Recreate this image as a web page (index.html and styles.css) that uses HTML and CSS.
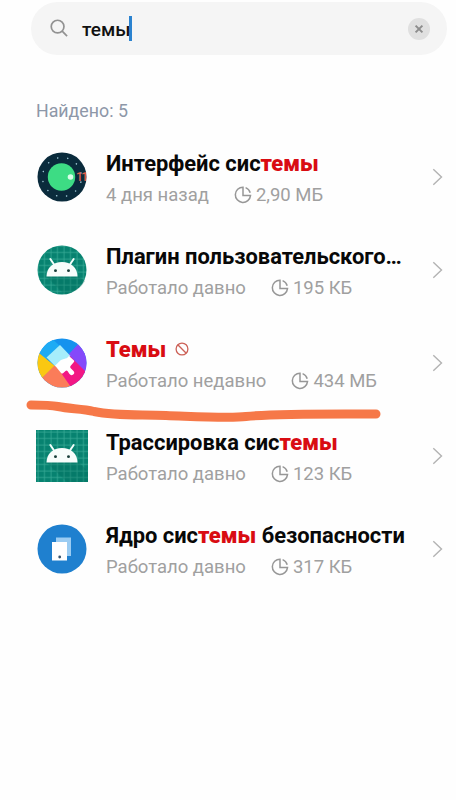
FILE: index.html
```html
<!DOCTYPE html>
<html lang="ru">
<head>
<meta charset="utf-8">
<title>Приложения</title>
<link rel="stylesheet" href="styles.css">
</head>
<body>
<svg class="defs" width="0" height="0" aria-hidden="true">
  <defs>
    <symbol id="pie" viewBox="0 0 18 18"><path d="M9 9.600V1.200A7.600 7.600 0 1 0 16.500 9.600ZM11.600 1.600A7.600 7.600 0 0 1 16.200 6.700" fill="none" stroke="currentColor" stroke-width="1.500"/></symbol>
    <symbol id="chevron" viewBox="0 0 11 18"><path d="M1.3 1.2 9.5 9 1.3 16.8" fill="none" stroke="currentColor" stroke-width="1.4"/></symbol>
    <pattern id="grid" width="6.5" height="6.5" patternUnits="userSpaceOnUse"><rect width="6.5" height="6.5" fill="#078270"/><path d="M0 3H6.5M3 0V6.5" stroke="#35a995" stroke-width=".8"/></pattern>
    <symbol id="robot" viewBox="0 0 34 21"><path d="M5 2 9 8M29 2 25 8" stroke="#f4fffc" stroke-width="2" stroke-linecap="round"/><path d="M1 20C1 11 8 5 17 5S33 11 33 20Z" fill="#f7fdfb"/><circle cx="10.3" cy="14" r="1.5" fill="#173d38"/><circle cx="23.7" cy="14" r="1.5" fill="#173d38"/></symbol>
  </defs>
</svg>
<main class="screen">
  <header class="search">
    <svg class="lens" viewBox="0 0 20 20"><circle cx="8" cy="8" r="6.7"/><path d="M12.8 12.8 18 18"/></svg>
    <span class="query">темы</span><span class="caret"></span>
    <svg class="clear" viewBox="0 0 22 22"><circle cx="11" cy="11" r="11" fill="#e0e0e0"/><path d="M7.6 7.6 14.4 14.4M14.4 7.6 7.6 14.4" stroke="#8d8d8d" stroke-width="2"/></svg>
  </header>
  <p class="found">Найдено: 5</p>
  <ul class="apps">
    <li class="app">
      <svg class="icon" viewBox="0 0 54 54"><circle cx="27" cy="27" r="24.5" fill="#0a2b3c"/><circle cx="27" cy="27" r="19.5" fill="none" stroke="#9cc4d2" stroke-width="1.5" stroke-linecap="round" stroke-dasharray=".1 10.11" stroke-dashoffset="5"/><circle cx="26.500" cy="27" r="13.7" fill="#3ddc84"/><circle cx="35.500" cy="27" r="2.8" fill="#d9ffe9"/><text class="badge" x="41" y="31">11</text></svg>
      <div class="info"><h2>Интерфейс сис<b>темы</b></h2><p class="meta"><span>4 дня назад</span><svg class="pie"><use href="#pie"/></svg><span>2,90 МБ</span></p></div>
      <svg class="chevron"><use href="#chevron"/></svg>
    </li>
    <li class="app">
      <svg class="icon" viewBox="0 0 54 54"><circle cx="27" cy="27" r="24.5" fill="url(#grid)"/><path d="M11 33H43L50 38A25 25 0 0 1 29 51Z" fill="#04695b" opacity=".3"/><use href="#robot" x="10.5" y="14" width="33" height="20.5"/></svg>
      <div class="info"><h2>Плагин пользовательского…</h2><p class="meta"><span>Работало давно</span><svg class="pie"><use href="#pie"/></svg><span>195 КБ</span></p></div>
      <svg class="chevron"><use href="#chevron"/></svg>
    </li>
    <li class="app">
      <svg class="icon" viewBox="0 0 54 54">
        <clipPath id="round"><circle cx="27" cy="27" r="24.5"/></clipPath>
        <g clip-path="url(#round)"><path d="M0 0H54V54H0Z" fill="#1592ee"/><path d="M0 12 14 0 25 10 11 24Z" fill="#1eabf4"/><path d="M34 18 46 5H54V42L34 24Z" fill="#8549fa"/><path d="M0 14 20 30 3 46Z" fill="#fac812"/><path d="M3 46 20 29 37 48 30 54H3Z" fill="#fb7c59"/><path d="M24 34 34 19 54 39 38 54Z" fill="#f21784"/></g>
        <path d="M11.500 21.500 25 9 35.500 20 20.500 30.500Z" fill="#a6edfb"/><path d="M20 29.500C24 27 24 24 29 23Q32 23 34 20L39 24.500Q39.700 25.500 38.500 26.500L35.500 30Q34.800 31 35.500 32L38.500 35Q40.200 37 38.200 38.500 36 40 34.500 38L32.500 35Q31.500 34 30.500 35L28 37.200Q27 38 26 37Z" fill="#fff"/>
      </svg>
      <div class="info"><h2><b>Темы</b><svg class="ban" viewBox="0 0 14 14"><circle cx="7" cy="7" r="5.9"/><path d="M2.8 2.8 11.200 11.200"/></svg></h2><p class="meta"><span>Работало недавно</span><svg class="pie"><use href="#pie"/></svg><span>434 МБ</span></p></div>
      <svg class="chevron"><use href="#chevron"/></svg>
      <svg class="marker" viewBox="0 0 356 26"><path d="M5 7C15 7 24 7 32 8.500C44 11 56 10.500 68 13.500C90 18 110 16.500 140 17.500C180 19 205 20.500 220 18.500C250 15.500 285 16 350 16" /></svg>
    </li>
    <li class="app">
      <svg class="icon" viewBox="0 0 54 54"><path d="M1 1H53V53H1Z" fill="url(#grid)"/><path d="M11 33H43L53 42V53H32Z" fill="#04695b" opacity=".3"/><use href="#robot" x="10.500" y="14" width="33" height="20.500"/></svg>
      <div class="info"><h2>Трассировка сис<b>темы</b></h2><p class="meta"><span>Работало давно</span><svg class="pie"><use href="#pie"/></svg><span>123 КБ</span></p></div>
      <svg class="chevron"><use href="#chevron"/></svg>
    </li>
    <li class="app">
      <svg class="icon" viewBox="0 0 54 54"><circle cx="27" cy="27" r="24.500" fill="#1f80cf"/><path d="M21 15.500H36V34H21Z" fill="#9bccf2"/><path d="M17 20H32V38.500H17Z" fill="#fff"/><circle cx="24.700" cy="35" r="1.400" fill="#35536e"/></svg>
      <div class="info"><h2>Ядро сис<b>темы</b> безопасности</h2><p class="meta"><span>Работало давно</span><svg class="pie"><use href="#pie"/></svg><span>317 КБ</span></p></div>
      <svg class="chevron"><use href="#chevron"/></svg>
    </li>
  </ul>
</main>
</body>
</html>
```
FILE: styles.css
```css
* { box-sizing: border-box; }
body { margin: 0; background: #fefefe; font-family: Roboto, "Noto Sans", sans-serif; }
.defs { position: absolute; }
.screen { height: 800px; overflow: hidden; padding-top: 2px; }
.search { height: 53px; margin: 0 9px 0 31px; border-radius: 27px; background: #f5f5f5; display: flex; align-items: center; padding: 0 17px 0 19px; }
.lens { width: 19px; height: 19px; fill: none; stroke: #929292; stroke-width: 1.8; }
.query { margin: 2px 0 0 13px; font-size: 19px; font-weight: 500; color: #111; }
.caret { width: 3px; height: 25px; margin-left: -1px; background: #2b83d0; }
.clear { width: 22px; height: 22px; margin-left: auto; }
.found { margin: 44px 0 0 36px; font-size: 17.8px; line-height: 24px; color: #8d97a8; }
.apps { list-style: none; margin: 7px 0 0; padding: 0; }
.app { position: relative; height: 93px; display: flex; align-items: center; padding: 0 13px 0 35px; }
.icon { width: 54px; height: 54px; flex: none; }
.badge { font-size: 12px; font-weight: 500; letter-spacing: -1.5px; fill: #e0604c; }
.info { margin-left: 17px; padding-top: 6px; flex: 1; min-width: 0; }
h2 { margin: 0; font-size: 21.9px; line-height: 28px; font-weight: 700; color: #080808; display: flex; align-items: center; white-space: pre; }
h2 b { color: #d90c12; }
.ban { width: 14px; height: 14px; margin-left: 9px; margin-bottom: 2px; fill: none; stroke: #cc6157; stroke-width: 1.3; }
.meta { margin: 3px 0 0; height: 28px; font-size: 18.5px; line-height: 28px; color: #a0a0a0; display: flex; align-items: center; white-space: nowrap; }
.pie { width: 18px; height: 18px; margin: 0 4px 1px 25px; color: #979797; }
.chevron { width: 11px; height: 18px; color: #b3b3b3; }
.marker { position: absolute; left: 26px; top: 82px; width: 356px; height: 26px; fill: none; stroke: #f67848; stroke-width: 9; stroke-linecap: round; z-index: 1; }
```
